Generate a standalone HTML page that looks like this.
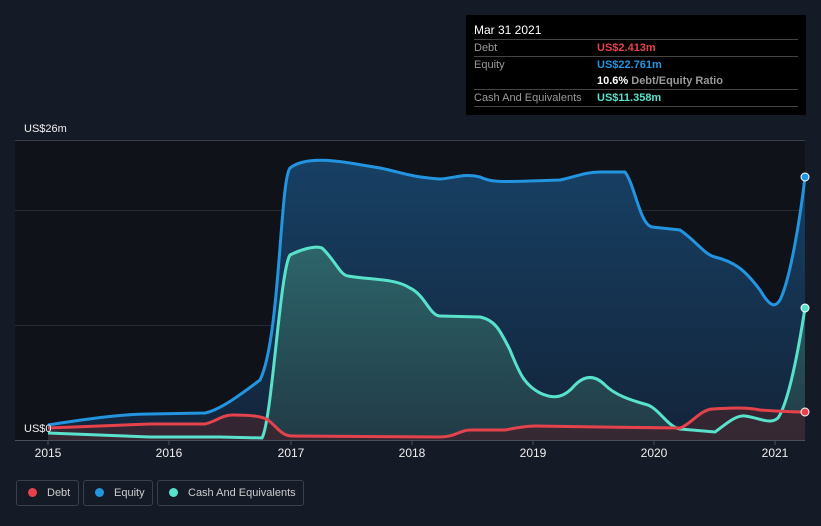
<!DOCTYPE html><html><head><style>
body{margin:0;background:#151b26;width:821px;height:526px;overflow:hidden;font-family:"Liberation Sans",sans-serif;position:relative}
.tt{position:absolute;left:466px;top:15px;width:340px;height:100px;background:#000;color:#fff;font-size:11px}
.tt .r{position:absolute;left:8px;right:8px;height:16px;line-height:16px;border-bottom:1px solid #444;color:#999}
.tt .r span{position:absolute;left:123px;font-weight:bold}
.lg{position:absolute;top:480px;height:26px;border:1px solid #3a4048;border-radius:3px;color:#ccc;font-size:11px;line-height:25px;box-sizing:border-box;white-space:nowrap}
.lg i{display:inline-block;width:9px;height:9px;border-radius:50%;margin:0 10px 0 11px;vertical-align:-1px}
</style></head><body>
<svg width="821" height="526" style="position:absolute;left:0;top:0">
<defs>
<linearGradient id="ge" x1="0" y1="0" x2="0" y2="1"><stop offset="0" stop-color="#174064"/><stop offset="1" stop-color="#13243a"/></linearGradient>
<linearGradient id="gc" x1="0" y1="0" x2="0" y2="1"><stop offset="0" stop-color="#2f6a6c"/><stop offset="1" stop-color="#233d48"/></linearGradient>
</defs>
<rect x="15" y="140" width="790" height="300" fill="#0f1319"/>
<line x1="15" y1="140.5" x2="805" y2="140.5" stroke="#3a3f47"/>
<line x1="15" y1="210.5" x2="805" y2="210.5" stroke="#262b33"/>
<line x1="15" y1="325.5" x2="805" y2="325.5" stroke="#262b33"/>
<path d="M48,425 C80,420 120,414 150,414 L205,413 C220,410 240,395 260,380 C280,340 280,180 290,168 C300,160 320,158 350,163 L380,168 C400,172 410,177 440,179 C455,178 465,173 480,177 C490,182 500,182 530,181 L560,180 C575,177 585,172 600,172 L625,172 C635,185 640,225 652,227 L680,230 C695,240 705,255 715,257 C735,262 745,270 760,290 C770,307 775,308 780,300 C790,280 800,220 805,177 L805,440 L48,440Z" fill="url(#ge)"/>
<path d="M48,433 L150,437 L220,437 L262,438 C272,420 280,270 290,255 C300,250 315,245 322,248 C335,260 340,275 348,276 C370,280 395,278 410,288 C425,295 430,316 440,316 L480,317 C495,320 500,330 510,350 C520,375 525,385 540,393 C555,400 565,397 575,385 C585,375 595,375 605,385 C615,395 630,400 648,405 C660,410 668,427 680,429 L715,432 C725,425 735,415 745,416 C760,418 770,425 778,418 C790,400 800,340 805,308 L805,440 L48,440Z" fill="url(#gc)" opacity="0.9"/>
<path d="M48,428 L150,424 L205,424 C215,422 222,415 232,415 C250,415 262,416 268,420 C278,428 282,436 292,436 L440,437 C455,437 460,430 470,430 L505,430 C515,428 525,426 535,426 L600,427 L680,428 C690,425 700,410 712,409 C730,408 745,407 760,410 C775,411 790,412 805,412 L805,440 L48,440Z" fill="#3a2630" opacity="0.85"/>
<path d="M48,425 C80,420 120,414 150,414 L205,413 C220,410 240,395 260,380 C280,340 280,180 290,168 C300,160 320,158 350,163 L380,168 C400,172 410,177 440,179 C455,178 465,173 480,177 C490,182 500,182 530,181 L560,180 C575,177 585,172 600,172 L625,172 C635,185 640,225 652,227 L680,230 C695,240 705,255 715,257 C735,262 745,270 760,290 C770,307 775,308 780,300 C790,280 800,220 805,177" fill="none" stroke="#2394df" stroke-width="3"/>
<path d="M48,433 L150,437 L220,437 L262,438 C272,420 280,270 290,255 C300,250 315,245 322,248 C335,260 340,275 348,276 C370,280 395,278 410,288 C425,295 430,316 440,316 L480,317 C495,320 500,330 510,350 C520,375 525,385 540,393 C555,400 565,397 575,385 C585,375 595,375 605,385 C615,395 630,400 648,405 C660,410 668,427 680,429 L715,432 C725,425 735,415 745,416 C760,418 770,425 778,418 C790,400 800,340 805,308" fill="none" stroke="#58e1cb" stroke-width="3"/>
<path d="M48,428 L150,424 L205,424 C215,422 222,415 232,415 C250,415 262,416 268,420 C278,428 282,436 292,436 L440,437 C455,437 460,430 470,430 L505,430 C515,428 525,426 535,426 L600,427 L680,428 C690,425 700,410 712,409 C730,408 745,407 760,410 C775,411 790,412 805,412" fill="none" stroke="#e5434c" stroke-width="3"/>
<circle cx="805" cy="177" r="4" fill="#2394df" stroke="#fff" stroke-width="1"/>
<circle cx="805" cy="308" r="4" fill="#58e1cb" stroke="#fff" stroke-width="1"/>
<circle cx="805" cy="412" r="4" fill="#e5434c" stroke="#fff" stroke-width="1"/>
<line x1="15" y1="440.5" x2="805" y2="440.5" stroke="#4a5058"/>
<g stroke="#4a5058"><line x1="48" y1="440" x2="48" y2="445"/><line x1="169" y1="440" x2="169" y2="445"/><line x1="291" y1="440" x2="291" y2="445"/><line x1="412" y1="440" x2="412" y2="445"/><line x1="533" y1="440" x2="533" y2="445"/><line x1="654" y1="440" x2="654" y2="445"/><line x1="775" y1="440" x2="775" y2="445"/></g>
<g fill="#eee" font-size="12" text-anchor="middle" font-family="Liberation Sans"><text x="48" y="457">2015</text><text x="169" y="457">2016</text><text x="291" y="457">2017</text><text x="412" y="457">2018</text><text x="533" y="457">2019</text><text x="654" y="457">2020</text><text x="775" y="457">2021</text></g>
<text x="24" y="132" fill="#eee" font-size="11" font-family="Liberation Sans">US$26m</text>
<text x="24" y="432" fill="#eee" font-size="11" font-family="Liberation Sans">US$0</text>
</svg>
<div class="tt">
<div style="position:absolute;left:8px;right:8px;top:8px;height:16px;font-size:12px;border-bottom:1px solid #444">Mar 31 2021</div>
<div class="r" style="top:25px">Debt<span style="color:#e5434c">US$2.413m</span></div>
<div class="r" style="top:42px;border:none">Equity<span style="color:#2394df">US$22.761m</span></div>
<div class="r" style="top:58px"><span style="color:#fff">10.6% <b style="color:#999">Debt/Equity Ratio</b></span></div>
<div class="r" style="top:75px">Cash And Equivalents<span style="color:#58e1cb">US$11.358m</span></div>
</div>
<div class="lg" style="left:16px;width:63px"><i style="background:#e5434c"></i>Debt</div>
<div class="lg" style="left:83px;width:70px"><i style="background:#2394df"></i>Equity</div>
<div class="lg" style="left:157px;width:147px"><i style="background:#58e1cb"></i>Cash And Equivalents</div>
</body></html>
